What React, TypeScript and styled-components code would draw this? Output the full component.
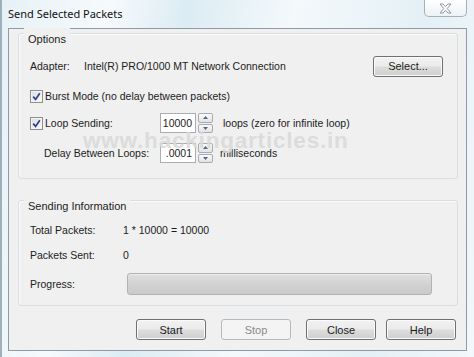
import React, { FunctionComponent } from 'react';
import styled, { createGlobalStyle } from 'styled-components';

const GlobalStyle = createGlobalStyle`
  html, body {
    margin: 0;
    padding: 0;
    width: 474px;
    height: 357px;
    overflow: hidden;
  }
  body {
    font-family: "Liberation Sans", Arial, sans-serif;
    font-size: 10.5px;
    color: #1c1c1c;
  }
`

const Window = styled.div`
  position: relative;
  width: 474px;
  height: 357px;
  box-sizing: border-box;
  border-left: 2px solid #9fb0bd;
  background: linear-gradient(100deg, #e6f1f6 0%, #f6fafc 20%, #dcecf4 35%, #f4f9fb 55%, #e4f0f6 80%, #f2f8fb 100%);
  display: flex;
  flex-direction: column;
`

const TitleBar = styled.div`
  height: 28px;
  display: flex;
  justify-content: space-between;
  align-items: flex-start;
  padding-left: 6px;
`

const Title = styled.div`
  font-family: "Noto Sans", "Liberation Sans", sans-serif;
  font-size: 11px;
  line-height: 28px;
  color: #111;
`

const CloseButton = styled.div`
  width: 43px;
  height: 17px;
  margin-right: 7px;
  box-sizing: border-box;
  border: 1px solid #a5b1ba;
  border-top: none;
  border-radius: 0 0 5px 5px;
  background: linear-gradient(#ffffff, #edf2f5);
  display: flex;
  align-items: center;
  justify-content: center;
`

const Client = styled.div`
  margin: 0 7px 0 6px;
  height: 323px;
  box-sizing: border-box;
  border: 1px solid #8e9ba6;
  background: #f0f0f0;
  padding: 4px 8px 0 9px;
  position: relative;
`

const Group = styled.div<{ $top?: number; $bottom: number }>`
  margin-top: ${p => p.$top ?? 0}px;
  border: 1px solid #d5dfe5;
  border-radius: 3px;
  box-shadow: inset 1px 1px 0 #fbfbfb;
  padding: 0 14px ${p => p.$bottom}px 11px;
  display: flex;
  flex-direction: column;
`

const Caption = styled.div`
  align-self: flex-start;
  margin: -6px 0 0 -6px;
  padding: 4px 4px 0;
  line-height: 14px;
  font-size: 11px;
  background: #f0f0f0;
`

const Row = styled.div<{ $top: number; $height?: number }>`
  margin-top: ${p => p.$top}px;
  height: ${p => p.$height ?? 20}px;
  display: flex;
  align-items: center;
`

const Label = styled.span<{ $width?: number; $indent?: number; $gap?: number }>`
  width: ${p => (p.$width ? `${p.$width}px` : 'auto')};
  padding-left: ${p => p.$indent ?? 0}px;
  margin-left: ${p => p.$gap ?? 0}px;
  box-sizing: border-box;
  flex-shrink: 0;
  white-space: nowrap;
`

const Spacer = styled.div`
  flex: 1;
`

const Button = styled.div<{ $disabled?: boolean; $gap?: number }>`
  width: 70px;
  height: 21px;
  margin-left: ${p => p.$gap ?? 0}px;
  box-sizing: border-box;
  border: 1px solid ${p => (p.$disabled ? '#b7babc' : '#707070')};
  border-radius: 3px;
  background: ${p =>
    p.$disabled
      ? '#f4f4f4'
      : 'linear-gradient(#f2f2f2 0%, #ebebeb 48%, #dddddd 52%, #cfcfcf 100%)'};
  box-shadow: inset 0 0 0 1px ${p => (p.$disabled ? '#f4f4f4' : '#fbfbfb')};
  color: ${p => (p.$disabled ? '#8a8a8a' : '#1c1c1c')};
  font-size: 11px;
  display: flex;
  align-items: center;
  justify-content: center;
`

const CheckBox = styled.div`
  width: 13px;
  height: 13px;
  box-sizing: border-box;
  border: 1px solid #8e8f8f;
  background: linear-gradient(135deg, #dcdcdc, #fbfbfb);
  box-shadow: inset 0 0 0 1px #f4f4f4;
  margin-right: 2px;
  display: flex;
  align-items: center;
  justify-content: center;
`

const SpinBox = styled.div`
  width: 53px;
  height: 20px;
  display: flex;
  gap: 2px;
  flex-shrink: 0;
`

const SpinInput = styled.div`
  width: 36px;
  box-sizing: border-box;
  border: 1px solid #abadb3;
  background: #fff;
  display: flex;
  align-items: center;
  justify-content: flex-end;
  padding-right: 3px;
  font-size: 10.5px;
`

const SpinButtons = styled.div`
  width: 15px;
  display: flex;
  flex-direction: column;
  gap: 1px;
`

const SpinButton = styled.div`
  flex: 1;
  box-sizing: border-box;
  border: 1px solid #a8acb0;
  border-radius: 2px;
  background: linear-gradient(#fafafa, #e2e2e2);
  display: flex;
  align-items: center;
  justify-content: center;
`

const Progress = styled.div`
  width: 305px;
  height: 22px;
  box-sizing: border-box;
  border: 1px solid #b2b2b2;
  border-radius: 3px;
  background: linear-gradient(#e0e0e0, #d2d2d2 50%, #cacaca);
  box-shadow: inset 0 1px 0 #ececec;
`

const ButtonBar = styled.div`
  margin-top: 13px;
  padding-left: 118px;
  display: flex;
`

const Watermark = styled.div`
  position: absolute;
  left: 74px;
  top: 99px;
  font-family: "Liberation Sans", Arial, sans-serif;
  font-weight: bold;
  font-size: 22.5px;
  letter-spacing: 0.8px;
  color: #d9d9d9;
  opacity: 0.85;
  pointer-events: none;
`

const Check = () => (
  <svg width="9" height="9" viewBox="0 0 9 9">
    <path d="M1.2 4.6 L3.6 7.4 L7.8 1.2" fill="none" stroke="#2c3f8f" strokeWidth="1.7" />
  </svg>
)

const Arrow: FunctionComponent<{ up?: boolean }> = ({ up }) => (
  <svg width="5" height="3" viewBox="0 0 5 3">
    <path d={up ? 'M0 3 L2.5 0 L5 3 Z' : 'M0 0 L2.5 3 L5 0 Z'} fill="#4b6a8c" />
  </svg>
)

const Spin: FunctionComponent<{ value: string }> = ({ value }) => (
  <SpinBox>
    <SpinInput>{value}</SpinInput>
    <SpinButtons>
      <SpinButton><Arrow up /></SpinButton>
      <SpinButton><Arrow /></SpinButton>
    </SpinButtons>
  </SpinBox>
)

const App = () => (
  <Window>
    <GlobalStyle />
    <TitleBar>
      <Title>Send Selected Packets</Title>
      <CloseButton>
        <svg width="13" height="11" viewBox="0 0 13 11">
          <path
            d="M1 1 H4 L6.5 3.6 L9 1 H12 L8.2 5.5 L12 10 H9 L6.5 7.4 L4 10 H1 L4.8 5.5 Z"
            fill="#ffffff"
            stroke="#8e969c"
            strokeWidth="1"
          />
        </svg>
      </CloseButton>
    </TitleBar>
    <Client>
      <Group $top={0} $bottom={15}>
        <Caption>Options</Caption>
        <Row $top={10}>
          <Label $width={54}>Adapter:</Label>
          <Label>Intel(R) PRO/1000 MT Network Connection</Label>
          <Spacer />
          <Button>Select...</Button>
        </Row>
        <Row $top={10}>
          <CheckBox><Check /></CheckBox>
          <Label>Burst Mode (no delay between packets)</Label>
        </Row>
        <Row $top={7}>
          <CheckBox><Check /></CheckBox>
          <Label $width={115}>Loop Sending:</Label>
          <Spin value="10000" />
          <Label $gap={10}>loops (zero for infinite loop)</Label>
        </Row>
        <Row $top={10}>
          <Label $width={130} $indent={14}>Delay Between Loops:</Label>
          <Spin value=".0001" />
          <Label $gap={7}>milliseconds</Label>
        </Row>
      </Group>
      <Group $top={21} $bottom={10}>
        <Caption>Sending Information</Caption>
        <Row $top={7}>
          <Label $width={93}>Total Packets:</Label>
          <Label>1 * 10000 = 10000</Label>
        </Row>
        <Row $top={5}>
          <Label $width={93}>Packets Sent:</Label>
          <Label>0</Label>
        </Row>
        <Row $top={8} $height={22}>
          <Label $width={97}>Progress:</Label>
          <Progress />
        </Row>
      </Group>
      <ButtonBar>
        <Button>Start</Button>
        <Button $disabled $gap={15}>Stop</Button>
        <Button $gap={15}>Close</Button>
        <Button $gap={10}>Help</Button>
      </ButtonBar>
      <Watermark>www.hackingarticles.in</Watermark>
    </Client>
  </Window>
)

export default App
